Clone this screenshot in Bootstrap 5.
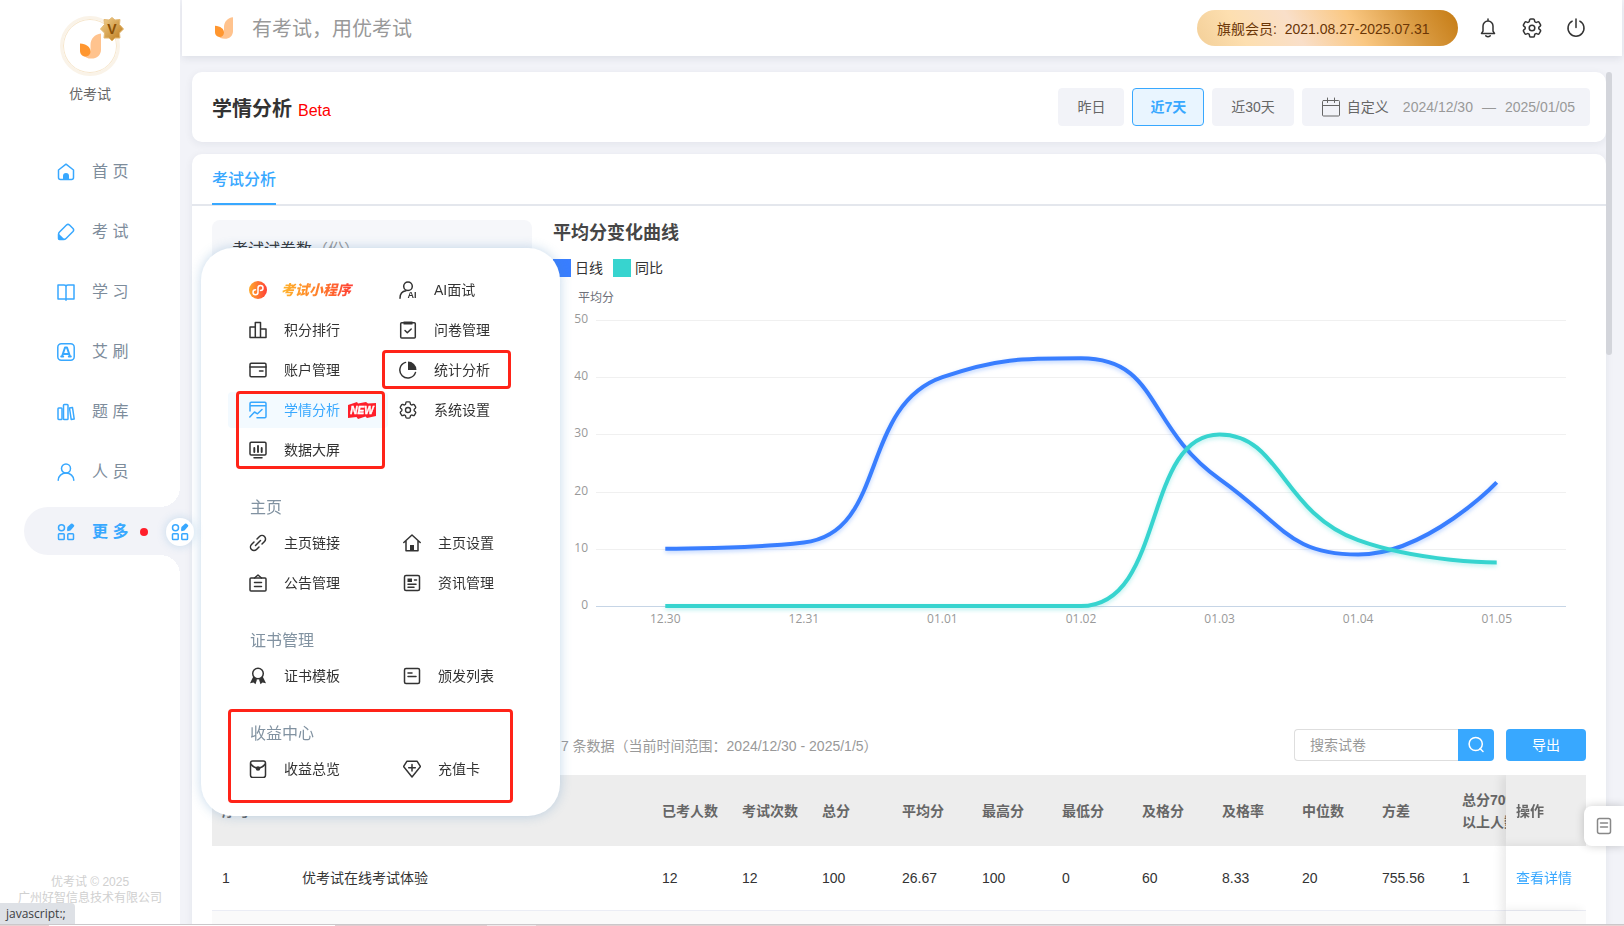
<!DOCTYPE html>
<html lang="zh-CN">
<head>
<meta charset="utf-8">
<meta name="viewport" content="width=device-width, initial-scale=1">
<title>学情分析 - 优考试</title>
<link rel="stylesheet" href="https://cdn.jsdelivr.net/npm/bootstrap@5.3.0/dist/css/bootstrap.min.css">
<style>
:root{--brand:#38a8ff;--page:#f2f3f8}
body{font-family:"Liberation Sans","Noto Sans CJK SC",sans-serif;font-size:14px;line-height:20px;color:#333;background:var(--page)}
a{text-decoration:none;color:inherit}
.ico{width:18px;height:18px;flex:none;overflow:visible;fill:none;stroke:currentColor;stroke-width:1.5;stroke-linejoin:round;stroke-linecap:round}
.ico symbol{overflow:visible}
.solid{fill:currentColor;stroke:none}
.glyph{fill:currentColor;stroke:none;font-weight:700}
/* sidebar */
.side{width:180px;z-index:5}
.avatar{width:60px;height:60px;border:3px solid #faf3e8;background:#fff;box-shadow:inset 0 0 0 1px #f6e6cc}
.vip{right:-8px;top:-3px;width:26px;height:26px}
.side-name{color:#666}
.menu{margin-top:43px;gap:12px}
.menu-link{height:48px;margin-left:24px;padding:2px 0 0 33px;gap:17px;font-size:16px;color:#7d8c9b}
.menu-link .ico{color:var(--brand)}
.menu-link.active{background:var(--page);border-radius:24px 0 0 24px;color:var(--brand);font-weight:700}
.menu-link.active::before,.menu-link.active::after{content:"";position:absolute;right:0;width:20px;height:20px}
.menu-link.active::before{bottom:100%;background:radial-gradient(circle at 0 0,#fff 20px,var(--page) 20px)}
.menu-link.active::after{top:100%;background:radial-gradient(circle at 0 100%,#fff 20px,var(--page) 20px)}
.dot{width:8px;height:8px;background:#ff1f2b;margin-left:-5px}
.puck{right:-14px;top:11px;width:28px;height:28px;box-shadow:0 0 10px rgba(80,150,210,.28)}
.side-foot{font-size:12px;line-height:16px;color:#d0d0d0;padding-bottom:20px}
/* top bar */
.topbar{height:56px;margin:0 2px;padding:0 40px 0 33px;box-shadow:0 2px 8px rgba(30,40,70,.1)}
.slogan{font-size:20px;line-height:28px;color:#999;margin-left:19px;padding-top:2px}
.member{height:36px;width:261px;padding:2px 20px 0;color:#6b3606;background:linear-gradient(60deg,#f3cf98 0,#fddfb0 18%,#f9dfc9 38%,#fac883 60%,#d99a41 82%,#c57b13 100%)}
.top-btn{background:none;border:0;padding:0;width:20px;height:20px;color:#333;margin-left:24px}
.top-btn .ico{width:20px;height:20px;display:block}
/* content */
.content{padding:16px 18px 0 12px;min-height:0}
.panel{background:#fff;border-radius:10px;box-shadow:0 2px 8px rgba(30,40,70,.07)}
.title-panel{height:70px;padding:0 16px 0 20px}
.title-panel h1{font-size:20px;line-height:28px}
.beta{font-size:16px;color:#f00;margin-left:6px}
.range{height:38px;border:1px solid var(--page);border-radius:4px;background:var(--page);color:#666;padding:0 18px}
.range.on{background:#e9f5ff;border-color:var(--brand);color:var(--brand);font-weight:700;padding:0 17px}
.range.custom{padding:0 14px 0 18px}
.range.custom .ico{width:20px;height:20px;stroke-width:1;margin-right:6px}
.range.custom .dash{margin:0 9px}
.range.custom .from{margin-left:14px}
.faint{color:#999}
.body-panel{margin-top:12px;border-radius:10px 10px 0 0;min-height:0;overflow:hidden}
.tabs{height:52px;padding:0 20px;border-bottom:2px solid #e4e7ed}
.tabs a{font-size:16px;font-weight:500;color:var(--brand);border-bottom:2px solid var(--brand);height:51px;line-height:51px}
.inner{padding:14px 20px 0}
.stat{width:320px;height:150px;border-radius:8px;background:#f6f7fa;padding:18px 20px;font-size:16px;line-height:24px;flex:none}
.chart-col{margin-left:11px;min-width:0}
.chart-col h2{font-size:18px;line-height:26px;color:#464646;padding-left:10px;margin:0 0 13px}
.legend-row{height:18px;line-height:18px;padding-left:10px;gap:10px}
.swatch{width:18px;height:18px;margin-right:4px}
#chart{height:350px;margin-top:6px;display:block;width:100%;font-family:"Open Sans","Noto Sans CJK SC",sans-serif;font-size:12px}
.toolbar{margin-top:96px;padding-left:331px}
.summary{padding-top:2px}
.search{width:200px}
.search .form-control{height:32px;font-size:14px;padding:0 15px;border-color:#dedede;border-radius:4px 0 0 4px;border-right:0}
.search .form-control::placeholder{color:#999}
.blue-btn{background:var(--brand);color:#fff;border:0;height:32px;border-radius:4px}
.search .blue-btn{width:36px;border-radius:0 4px 4px 0;padding:0 9px}
.search .blue-btn .ico{display:block}
.export{width:80px;margin-left:12px}
.grid-wrap{margin-top:14px;overflow:hidden}
.score-table{table-layout:fixed;width:calc(100% + 26px);border-collapse:separate;border-spacing:0}
.score-table th{height:71px;background:#ededed;color:#666;padding:0 10px;line-height:22px}
.score-table td{height:65px;background:#fff;padding:0 10px;border-bottom:1px solid #ebedf5}
.score-table tr:nth-child(2) td{background:#fafafa}
.score-table .pin{position:sticky;right:0;box-shadow:-4px 0 10px rgba(0,0,0,.09)}
.w-num{width:80px}
.scroll-thumb{right:12px;top:72px;width:6px;height:283px;background:#d3d5db;border-radius:3px}
.side-tool{right:0;top:806px;width:40px;height:40px;border:0;background:#fff;border-radius:8px 0 0 8px;box-shadow:0 0 10px rgba(0,0,0,.2);color:#888;padding:0 0 0 11px}
/* flyout */
.flyout{left:201px;top:248px;width:359px;padding:22px 0 27px 27px;border-radius:32px;background:#fff;box-shadow:0 0 12px rgba(70,135,190,.32);z-index:4}
.fly-grid{display:grid;grid-template-columns:154px 154px}
.fly-grid.first{grid-template-columns:150px 150px}
.fly-grid a{height:36px;margin:2px 0;padding-left:21px;gap:17px;display:flex;align-items:center;white-space:nowrap}
.fly-grid a.on{width:160px;background:#f3faff;border-radius:4px;color:var(--brand)}
.flyout h3{font-size:16px;line-height:24px;font-weight:400;color:#8192a1;margin:26px 0 3px 22px}
.mini{font-size:14px;font-weight:900;font-style:italic;margin-left:-3px;padding-right:3px;background:linear-gradient(90deg,#ffb52b,#ff7a2c 55%,#ff3b35);-webkit-background-clip:text;background-clip:text;color:transparent}
.new-tag{width:28px;height:17px;margin-left:-9px}
.mark-box{border:3px solid #ff2318;border-radius:4px;pointer-events:none}
.mark-a{left:181px;top:102px;width:129px;height:39px}
.mark-b{left:35px;top:143px;width:149px;height:78px}
.mark-c{left:27px;top:461px;width:285px;height:94px}
/* window edge */
.status{left:0;bottom:2px;height:21px;padding:0 9px 0 6px;background:#dee1e6;border-radius:0 4px 0 0;font:12px/21px "Open Sans",sans-serif;color:#3c4043;z-index:7}
.edge{left:0;right:0;bottom:0;height:2px;z-index:6;background:linear-gradient(90deg,#e5d3d3 0 3%,#fff 3% 20.6%,#e0cdd0 20.6% 30%,#f1e9eb 30% 33%,#e3cfd1 33% 50%,#e9dfe4 56%,#dad6da 70%,#ead9d8 85%,#e6d5d5);border-top:1px solid #cbc8cb}
</style>
</head>
<body class="vh-100 overflow-hidden d-flex position-relative">

<svg class="position-absolute" width="0" height="0" aria-hidden="true">
  <defs><linearGradient id="og"><stop stop-color="#ffab2c"/><stop offset="1" stop-color="#ff3f36"/></linearGradient></defs>
  <symbol id="i-logo" viewBox="0 0 20 24"><path fill="#ffc38e" d="M20 0v15.500c0 5-4 8.500-9 8.500-4 0-6.500-1.500-8-4 4.500 1.500 7-1 7-5v-4C10 5 14 .6 20 0z"/><path fill="#ff962f" d="M0 9.500c6 .3 10 3.500 10 7.500 0 3-2 5-5 5s-5-2.500-5-5.500z"/></symbol>
  <symbol id="i-home" viewBox="0 0 18 18"><path d="M1.500 7 9 1.200 16.500 7v7.500q0 2-2 2h-11q-2 0-2-2z"/><path class="solid" d="M6 17v-4a3 3 0 0 1 6 0v4z"/></symbol>
  <symbol id="i-pen" viewBox="0 0 18 18"><path d="M9.500 2 q1.500-1.300 3 0l3.500 3.500q1.300 1.500 0 3L9 15.500q-1 1-2.500 1H2.500q-1 0-1-1V11.500q0-1.500 1-2.500z"/><path class="solid" d="M1 10 8 16.800 2 17 1 15z"/></symbol>
  <symbol id="i-book" viewBox="0 0 18 18"><path d="M1 2h6q2 0 2 1.500V16H1zM17 2h-6Q9 2 9 3.500V16h8zM9 16v1.200"/></symbol>
  <symbol id="i-a" viewBox="0 0 18 18"><rect x=".8" y=".8" width="16.400" height="16.400" rx="3.500"/><path stroke-width="2" d="m5 13.500 3-9h2l3 9M6.500 11h5M4.200 13.500h2M11.800 13.500h2"/></symbol>
  <symbol id="i-lib" viewBox="0 0 18 18"><rect x="1" y="5" width="4" height="11.500" rx=".8"/><rect x="6.500" y="1.500" width="4.500" height="15" rx=".8"/><path d="m12.500 5 3-.5 1.700 11.500-3 .5z"/></symbol>
  <symbol id="i-user" viewBox="0 0 18 18"><circle cx="9" cy="5.500" r="4.500"/><path d="M1.200 17.200c0-4 3.500-7.200 7.800-7.200s7.800 3.200 7.800 7.200"/></symbol>
  <symbol id="i-more" viewBox="0 0 18 18"><circle cx="4.500" cy="4.800" r="3"/><rect x="1.500" y="10.800" width="5.700" height="5.700" rx=".8"/><rect x="10.800" y="10.800" width="5.700" height="5.700" rx=".8"/><path class="solid" d="m10 7 .4-3L14 .7q1-.6 1.600 0L17 2q.6.800 0 1.600L13.500 7.500 10.500 8.200z"/></symbol>
  <symbol id="i-bell" viewBox="0 0 20 20"><path d="M3.500 15.500 5 13.200V8a5 5 0 0 1 10 0v5.200l1.500 2.300zM10 1v2M7.800 17.800q2.200 1.800 4.400 0"/></symbol>
  <symbol id="i-gear" viewBox="2 2 20 20"><path d="M9.594 3.940c.09-.542.56-.94 1.110-.94h2.593c.55 0 1.020.398 1.110.94l.213 1.281c.063.374.313.686.645.87.074.04.147.083.22.127.325.196.72.257 1.075.124l1.217-.456a1.125 1.125 0 0 1 1.370.49l1.296 2.247a1.125 1.125 0 0 1-.26 1.431l-1.003.827c-.293.241-.438.613-.43.992a7.723 7.723 0 0 1 0 .255c-.008.378.137.75.43.991l1.004.827c.424.35.534.955.26 1.430l-1.298 2.247a1.125 1.125 0 0 1-1.369.491l-1.217-.456c-.355-.133-.75-.072-1.076.124a6.470 6.470 0 0 1-.22.128c-.331.183-.581.495-.644.869l-.213 1.281c-.09.543-.56.94-1.110.94h-2.594c-.55 0-1.019-.398-1.110-.94l-.213-1.281c-.062-.374-.312-.686-.644-.87a6.520 6.520 0 0 1-.22-.127c-.325-.196-.72-.257-1.076-.124l-1.217.456a1.125 1.125 0 0 1-1.369-.49l-1.297-2.247a1.125 1.125 0 0 1 .26-1.431l1.004-.827c.292-.24.437-.613.43-.991a6.932 6.932 0 0 1 0-.255c.007-.38-.138-.751-.43-.992l-1.004-.827a1.125 1.125 0 0 1-.26-1.430l1.297-2.247a1.125 1.125 0 0 1 1.370-.491l1.216.456c.356.133.751.072 1.076-.124.072-.044.146-.086.22-.128.332-.183.582-.495.644-.869l.214-1.280Z"/><circle cx="12" cy="12" r="2.800"/></symbol>
  <symbol id="i-power" viewBox="0 0 20 20"><path d="M6.200 3.200a8 8 0 1 0 7.600 0M10 1v8.500"/></symbol>
  <symbol id="i-cal" viewBox="0 0 20 20"><rect x="1.500" y="3.500" width="17" height="15.500" rx="1"/><path d="M1.500 8.500h17M6.500 1v4.500M13.500 1v4.500"/></symbol>
  <symbol id="i-search" viewBox="0 0 18 18"><circle cx="8.700" cy="8" r="6.600"/><path d="m13 12.500 3 3"/></symbol>
  <symbol id="i-note" viewBox="0 0 18 18"><rect x="2.500" y="1.500" width="13" height="15" rx="2"/><path d="M5.500 6h7M5.500 10h7"/></symbol>
  <symbol id="i-mini" viewBox="0 0 18 18"><circle cx="9" cy="9" r="9" fill="url(#og)" stroke="none"/><path stroke="#fff" d="M9 11.300V7a2.500 2.500 0 1 1 2.500 2.500M9 7v4.200A2.500 2.500 0 1 1 6.500 8.700"/></symbol>
  <symbol id="i-rank" viewBox="0 0 18 18"><path d="M1 6h5.300v10.500H1zM6.300 1.500h5.200v15H6.300zM11.500 8H17v8.500h-5.500z"/></symbol>
  <symbol id="i-survey" viewBox="0 0 18 18"><rect x="1.700" y="1.800" width="14.600" height="15.200" rx="1"/><path class="solid" d="M4.500.5h9v3h-9z"/><path d="m6 9.500 2.300 2.300L12.200 8"/></symbol>
  <symbol id="i-wallet" viewBox="0 0 18 18"><rect x="1" y="2.300" width="16" height="13.400" rx="1.200"/><path d="M1 6h16M10.500 10h3.500"/></symbol>
  <symbol id="i-pie" viewBox="0 0 18 18"><path d="M6.500 1.400a8 8 0 1 0 10 10"/><path class="solid" d="M9 .5A8.500 8.500 0 0 1 17.500 9H9z"/></symbol>
  <symbol id="i-trend" viewBox="0 0 18 18"><path d="M1 10V2.500Q1 1.300 2.200 1.300h13.600Q17 1.300 17 2.500v13q0 1.200-1.200 1.200H8M1 4.800h16M.8 16 5.500 11l3 1.800L13 8.500"/></symbol>
  <symbol id="i-screen" viewBox="0 0 18 18"><rect x="1" y="1.300" width="16" height="12.700" rx="1.200"/><path stroke-width="1.900" d="M5.300 7v4M9 5v6M12.700 7v4"/><path d="M5 16.800h8"/></symbol>
  <symbol id="i-link" viewBox="0 0 18 18"><path d="m8 5 2.500-2.500a3.500 3.500 0 0 1 5 5L13 10M10 13l-2.500 2.500a3.500 3.500 0 0 1-5-5L5 8M6.500 11.500l5-5"/></symbol>
  <symbol id="i-house" viewBox="0 0 18 18"><path d="M.8 8.500 9 1l8.200 7.500M3 7v9.700h12V7"/><path class="solid" d="M7 11h4v5H7z"/></symbol>
  <symbol id="i-board" viewBox="0 0 18 18"><rect x="1" y="4" width="16" height="13" rx="1"/><path d="m5.500 4 3.500-3 3.500 3M5.500 8.500h7M5.500 12.500h7"/></symbol>
  <symbol id="i-news" viewBox="0 0 18 18"><rect x="1.500" y="1.500" width="15" height="15" rx="1.500"/><path class="solid" d="M4.500 4.500H9V8H4.500z"/><path d="M11.500 6h2M5 10.300h8M5 13.300h6"/></symbol>
  <symbol id="i-medal" viewBox="0 0 18 18"><circle cx="9" cy="6.500" r="5.300"/><path class="solid" d="M4.300 9.500 8 12.500l-1.500 4.700-2-1.700-3.500.7zM13.700 9.500 10 12.500l1.500 4.700 2-1.700 3.500.7z"/></symbol>
  <symbol id="i-list" viewBox="0 0 18 18"><rect x="1.500" y="1.500" width="15" height="15" rx="1.500"/><path d="M5 6h4M5 9.500h8"/></symbol>
  <symbol id="i-purse" viewBox="0 0 18 18"><rect x="1.500" y="1" width="15" height="16.500" rx="2.200"/><path d="M1.800 4q3 4 7.200 4t7.200-4"/><circle class="solid" cx="9" cy="8.500" r="2.300"/></symbol>
  <symbol id="i-gem" viewBox="0 0 18 18"><path d="M4 1.200h10L17.500 6.500 9 17 .5 6.500zM9 4.500v6.500M5.700 7.700h6.600"/></symbol>
</svg>

<aside class="side bg-white d-flex flex-column position-relative flex-shrink-0">
  <div class="avatar rounded-circle position-relative mx-auto mt-3 d-flex align-items-center justify-content-center flex-shrink-0">
    <svg width="21" height="26"><use href="#i-logo"/></svg>
    <svg class="vip position-absolute" viewBox="0 0 26 26"><defs><linearGradient id="gd" x1="0" x2="1" y2="1"><stop stop-color="#f3d394"/><stop offset="1" stop-color="#ba7615"/></linearGradient></defs><path fill="url(#gd)" stroke="#e3b873" d="m13 1.500 3 2.500 5-.5-.5 5 4 4.500-4 4 .5 5-5 0-3 3-3-3-5 0 .5-5-4-4 4-4.500-.5-5 5 .5z"/><text x="13" y="18" text-anchor="middle" font-size="14" font-weight="700" fill="#8b5005">V</text></svg>
  </div>
  <div class="side-name text-center mt-2">优考试</div>
  <nav class="menu d-flex flex-column">
    <a class="menu-link d-flex align-items-center" href="#"><svg class="ico"><use href="#i-home"/></svg>首 页</a>
    <a class="menu-link d-flex align-items-center" href="#"><svg class="ico"><use href="#i-pen"/></svg>考 试</a>
    <a class="menu-link d-flex align-items-center" href="#"><svg class="ico"><use href="#i-book"/></svg>学 习</a>
    <a class="menu-link d-flex align-items-center" href="#"><svg class="ico"><use href="#i-a"/></svg>艾 刷</a>
    <a class="menu-link d-flex align-items-center" href="#"><svg class="ico"><use href="#i-lib"/></svg>题 库</a>
    <a class="menu-link d-flex align-items-center" href="#"><svg class="ico"><use href="#i-user"/></svg>人 员</a>
    <a class="menu-link active d-flex align-items-center position-relative" href="#"><svg class="ico"><use href="#i-more"/></svg>更 多<span class="dot rounded-circle"></span>
      <span class="puck position-absolute bg-white rounded-circle d-flex align-items-center justify-content-center"><svg class="ico"><use href="#i-more"/></svg></span></a>
  </nav>
  <div class="side-foot mt-auto text-center">优考试 © 2025<br>广州好智信息技术有限公司</div>
</aside>

<div class="flex-grow-1 d-flex flex-column" style="min-width:0">
  <header class="topbar bg-white d-flex align-items-center flex-shrink-0">
    <svg width="18" height="22"><use href="#i-logo"/></svg>
    <span class="slogan">有考试，用优考试</span>
    <span class="member rounded-pill ms-auto d-flex align-items-center">旗舰会员:&nbsp; 2021.08.27-2025.07.31</span>
    <button class="top-btn ms-3" type="button" aria-label="通知"><svg class="ico ms-1"><use href="#i-bell"/></svg></button>
    <button class="top-btn" type="button" aria-label="设置"><svg class="ico ms-1"><use href="#i-gear"/></svg></button>
    <button class="top-btn" type="button" aria-label="退出"><svg class="ico ms-1"><use href="#i-power"/></svg></button>
  </header>

  <main class="content flex-grow-1 d-flex flex-column">
    <section class="panel title-panel d-flex align-items-center flex-shrink-0">
      <div class="d-flex align-items-baseline pt-1"><h1 class="fw-bold mb-0">学情分析</h1><span class="beta">Beta</span></div>
      <div class="ms-auto d-flex gap-2">
        <button class="range" type="button">昨日</button>
        <button class="range on" type="button">近7天</button>
        <button class="range" type="button">近30天</button>
        <button class="range custom d-flex align-items-center" type="button"><svg class="ico"><use href="#i-cal"/></svg><span>自定义</span><span class="faint from">2024/12/30</span><span class="faint dash">—</span><span class="faint">2025/01/05</span></button>
      </div>
    </section>

    <section class="panel body-panel flex-grow-1">
      <div class="tabs d-flex"><a href="#">考试分析</a></div>
      <div class="inner">
        <div class="d-flex">
          <div class="stat">考试试卷数<span class="faint">（份）</span></div>
          <div class="chart-col flex-grow-1">
            <h2 class="fw-bold">平均分变化曲线</h2>
            <div class="legend-row d-flex align-items-center">
              <span class="d-flex"><span class="swatch" style="background:#397eff"></span>日线</span>
              <span class="d-flex"><span class="swatch" style="background:#37d4cf"></span>同比</span>
            </div>
            <svg id="chart" role="img" aria-label="平均分变化曲线"></svg>
          </div>
        </div>
        <div class="toolbar d-flex align-items-center">
          <span class="faint summary">共 7 条数据（当前时间范围：2024/12/30 - 2025/1/5）</span>
          <form class="search d-flex ms-auto">
            <input class="form-control" type="text" placeholder="搜索试卷" aria-label="搜索试卷">
            <button class="blue-btn flex-shrink-0" type="button" aria-label="搜索"><svg class="ico"><use href="#i-search"/></svg></button>
          </form>
          <button class="blue-btn export" type="button">导出</button>
        </div>
        <div class="grid-wrap">
          <table class="score-table">
            <colgroup><col class="w-num"><col><col class="w-num"><col class="w-num"><col class="w-num"><col class="w-num"><col class="w-num"><col class="w-num"><col class="w-num"><col class="w-num"><col class="w-num"><col class="w-num"><col class="w-num"><col class="w-num"></colgroup>
            <thead><tr><th>序号</th><th></th><th>已考人数</th><th>考试次数</th><th>总分</th><th>平均分</th><th>最高分</th><th>最低分</th><th>及格分</th><th>及格率</th><th>中位数</th><th>方差</th><th>总分70%以上人数</th><th class="pin">操作</th></tr></thead>
            <tbody>
              <tr><td>1</td><td>优考试在线考试体验</td><td>12</td><td>12</td><td>100</td><td>26.67</td><td>100</td><td>0</td><td>60</td><td>8.33</td><td>20</td><td>755.56</td><td>1</td><td class="pin"><a href="#" style="color:var(--brand)">查看详情</a></td></tr>
              <tr><td></td><td></td><td></td><td></td><td></td><td></td><td></td><td></td><td></td><td></td><td></td><td></td><td></td><td class="pin"></td></tr>
            </tbody>
          </table>
        </div>
      </div>
    </section>
  </main>
</div>

<div class="flyout position-absolute">
  <div class="fly-grid first">
    <a href="#"><svg class="ico"><use href="#i-mini"/></svg><span class="mini">考试小程序</span></a>
    <a href="#"><svg class="ico" viewBox="0 0 18 18"><circle cx="9" cy="5.200" r="4.300"/><path d="M1 17.200C1 13 3.500 10.300 7 9.800"/><text class="glyph" x="8.500" y="17" font-size="9">AI</text></svg>AI面试</a>
    <a href="#"><svg class="ico"><use href="#i-rank"/></svg>积分排行</a>
    <a href="#"><svg class="ico"><use href="#i-survey"/></svg>问卷管理</a>
    <a href="#"><svg class="ico"><use href="#i-wallet"/></svg>账户管理</a>
    <a href="#"><svg class="ico"><use href="#i-pie"/></svg>统计分析</a>
    <a href="#" class="on"><svg class="ico"><use href="#i-trend"/></svg>学情分析<svg class="new-tag" viewBox="0 0 28 17"><path fill="#ff1f2b" d="m0 3 9-3 1 1.500L18 0l2 1.500L28 1v13l-9 2-1.500-1.500L10 17l-1.500-2L0 16z"/><text x="14" y="12" text-anchor="middle" font-size="10" font-weight="700" font-style="italic" fill="#fff" stroke="#fff" stroke-width=".4">NEW</text></svg></a>
    <a href="#"><svg class="ico"><use href="#i-gear"/></svg>系统设置</a>
    <a href="#"><svg class="ico"><use href="#i-screen"/></svg>数据大屏</a>
  </div>
  <h3>主页</h3>
  <div class="fly-grid">
    <a href="#"><svg class="ico"><use href="#i-link"/></svg>主页链接</a>
    <a href="#"><svg class="ico"><use href="#i-house"/></svg>主页设置</a>
    <a href="#"><svg class="ico"><use href="#i-board"/></svg>公告管理</a>
    <a href="#"><svg class="ico"><use href="#i-news"/></svg>资讯管理</a>
  </div>
  <h3>证书管理</h3>
  <div class="fly-grid">
    <a href="#"><svg class="ico"><use href="#i-medal"/></svg>证书模板</a>
    <a href="#"><svg class="ico"><use href="#i-list"/></svg>颁发列表</a>
  </div>
  <h3>收益中心</h3>
  <div class="fly-grid">
    <a href="#"><svg class="ico"><use href="#i-purse"/></svg>收益总览</a>
    <a href="#"><svg class="ico"><use href="#i-gem"/></svg>充值卡</a>
  </div>
  <div class="mark-box mark-a position-absolute"></div>
  <div class="mark-box mark-b position-absolute"></div>
  <div class="mark-box mark-c position-absolute"></div>
</div>

<div class="scroll-thumb position-absolute"></div>
<button class="side-tool position-absolute" type="button" aria-label="反馈"><svg class="ico d-block"><use href="#i-note"/></svg></button>
<div class="status position-absolute">javascript:;</div>
<div class="edge position-absolute"></div>

<script src="https://cdn.jsdelivr.net/npm/bootstrap@5.3.0/dist/js/bootstrap.bundle.min.js"></script>
<script>
(function () {
  var svg = document.getElementById('chart');
  var days = ['12.30', '12.31', '01.01', '01.02', '01.03', '01.04', '01.05'];
  var series = [
    {color: '#397eff', data: [10, 11.1, 40, 43.3, 22.2, 9, 21.6]},
    {color: '#37d4cf', data: [0, 0, 0, 0, 30, 11.5, 7.6]}
  ];
  var left = 53, right = 20, top = 37, bottom = 323;

  function clamp(v, a, b) { return Math.max(Math.min(a, b), Math.min(Math.max(a, b), v)); }

  // Smooth path whose control points stay inside the box of each segment
  function smooth(p) {
    var k = 0.5, prevCp = p[0], d = 'M' + p[0];
    for (var i = 1; i < p.length; i++) {
      var c = p[i], q = p[i - 1], n = p[i + 1], inCp = c, outCp = c;
      if (n) {
        var lp = Math.hypot(c[0] - q[0], c[1] - q[1]), ln = Math.hypot(n[0] - c[0], n[1] - c[1]);
        var r = ln / (ln + lp);
        outCp = [0, 1].map(function (j) { return clamp(c[j] + (n[j] - q[j]) * k * r, c[j], n[j]); });
        inCp = [0, 1].map(function (j) { return clamp(c[j] - (outCp[j] - c[j]) * lp / ln, q[j], c[j]); });
        outCp = [0, 1].map(function (j) { return c[j] + (c[j] - inCp[j]) * ln / lp; });
      }
      d += 'C' + prevCp + ' ' + inCp + ' ' + c;
      prevCp = outCp;
    }
    return d;
  }

  function draw() {
    var w = svg.clientWidth - left - right, h = bottom - top, out = '';
    for (var v = 0; v <= 50; v += 10) {
      var y = Math.round(bottom - v / 50 * h) + 0.5;
      out += '<path d="M' + left + ' ' + y + 'h' + w + '" stroke="' + (v ? '#f0f0f0' : '#c6d5e6') + '"/>' +
        '<text x="' + (left - 8) + '" y="' + (y + 2.5) + '" text-anchor="end" fill="#999">' + v + '</text>';
    }
    out += '<text x="' + left + '" y="19" text-anchor="middle" fill="#6e7079">平均分</text>';
    days.forEach(function (t, i) {
      out += '<text x="' + (left + w / 7 * (i + 0.5)) + '" y="340" text-anchor="middle" fill="#999">' + t + '</text>';
    });
    series.forEach(function (s) {
      var pts = s.data.map(function (v, i) { return [left + w / 7 * (i + 0.5), bottom - v / 50 * h]; });
      out += '<path d="' + smooth(pts) + '" fill="none" stroke="' + s.color + '" stroke-width="4" stroke-linejoin="bevel" style="filter:drop-shadow(0 2px 2px ' + s.color + '55)"/>';
    });
    svg.innerHTML = out;
  }
  draw();
  window.addEventListener('resize', draw);
})();
</script>
</body>
</html>
